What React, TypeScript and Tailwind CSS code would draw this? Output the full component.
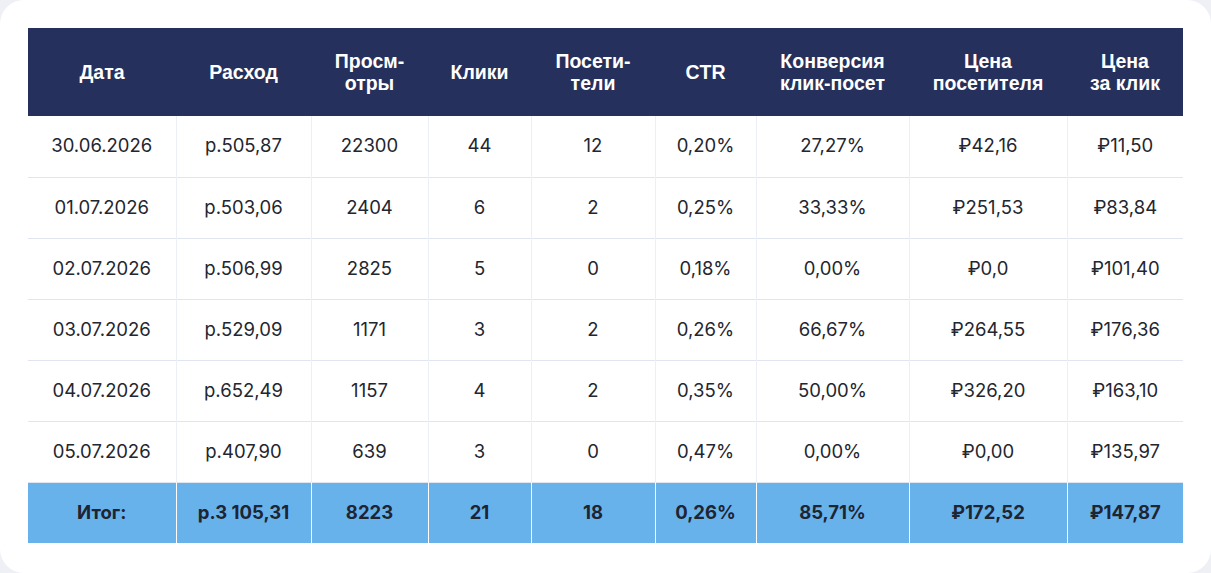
import React from "react";

const cols = [148, 135, 117, 103, 124, 101, 153, 158, 116];
const headers: string[][] = [
  ["Дата"],
  ["Расход"],
  ["Просм-", "отры"],
  ["Клики"],
  ["Посети-", "тели"],
  ["CTR"],
  ["Конверсия", "клик-посет"],
  ["Цена", "посетителя"],
  ["Цена", "за клик"],
];
const rows: string[][] = [
  ["30.06.2026", "р.505,87", "22300", "44", "12", "0,20%", "27,27%", "₽42,16", "₽11,50"],
  ["01.07.2026", "р.503,06", "2404", "6", "2", "0,25%", "33,33%", "₽251,53", "₽83,84"],
  ["02.07.2026", "р.506,99", "2825", "5", "0", "0,18%", "0,00%", "₽0,0", "₽101,40"],
  ["03.07.2026", "р.529,09", "1171", "3", "2", "0,26%", "66,67%", "₽264,55", "₽176,36"],
  ["04.07.2026", "р.652,49", "1157", "4", "2", "0,35%", "50,00%", "₽326,20", "₽163,10"],
  ["05.07.2026", "р.407,90", "639", "3", "0", "0,47%", "0,00%", "₽0,00", "₽135,97"],
];
const total = ["Итог:", "р.3 105,31", "8223", "21", "18", "0,26%", "85,71%", "₽172,52", "₽147,87"];

export default function App() {
  return (
    <div className="w-[1211px] h-[573px] bg-[#eef0f5]">
      <div className="w-full h-full bg-white rounded-[24px] pt-[28px] px-[28px]">
        <table
          className="border-collapse table-fixed w-[1155px]"
          style={{ fontFamily: "Inter, 'Noto Sans', sans-serif" }}
        >
          <colgroup>
            {cols.map((w, i) => (
              <col key={i} style={{ width: w }} />
            ))}
          </colgroup>
          <thead>
            <tr className="bg-[#26305c] h-[88px]">
              {headers.map((h, i) => (
                <th
                  key={i}
                  className="text-white text-[19.5px] font-bold leading-[22px] text-center align-middle p-0"
                  style={{ fontFamily: "'Liberation Sans', Arial, sans-serif" }}
                >
                  {h.map((l, j) => (
                    <div key={j}>{l}</div>
                  ))}
                </th>
              ))}
            </tr>
          </thead>
          <tbody>
            {rows.map((r, ri) => (
              <tr key={ri} className="h-[61px] border-b border-[#dfe5f1]">
                {r.map((c, ci) => (
                  <td
                    key={ci}
                    className={`text-[18.5px] text-[#23262f] text-center align-middle p-0 ${
                      ci > 0 ? "border-l border-[#eceff6]" : ""
                    }`}
                  >
                    {c}
                  </td>
                ))}
              </tr>
            ))}
            <tr className="h-[61px] bg-[#68b2ec]">
              {total.map((c, ci) => (
                <td
                  key={ci}
                  className={`text-[18.5px] font-bold text-[#1e2430] text-center align-middle p-0 ${
                    ci > 0 ? "border-l border-white" : ""
                  }`}
                >
                  {c}
                </td>
              ))}
            </tr>
          </tbody>
        </table>
      </div>
    </div>
  );
}
